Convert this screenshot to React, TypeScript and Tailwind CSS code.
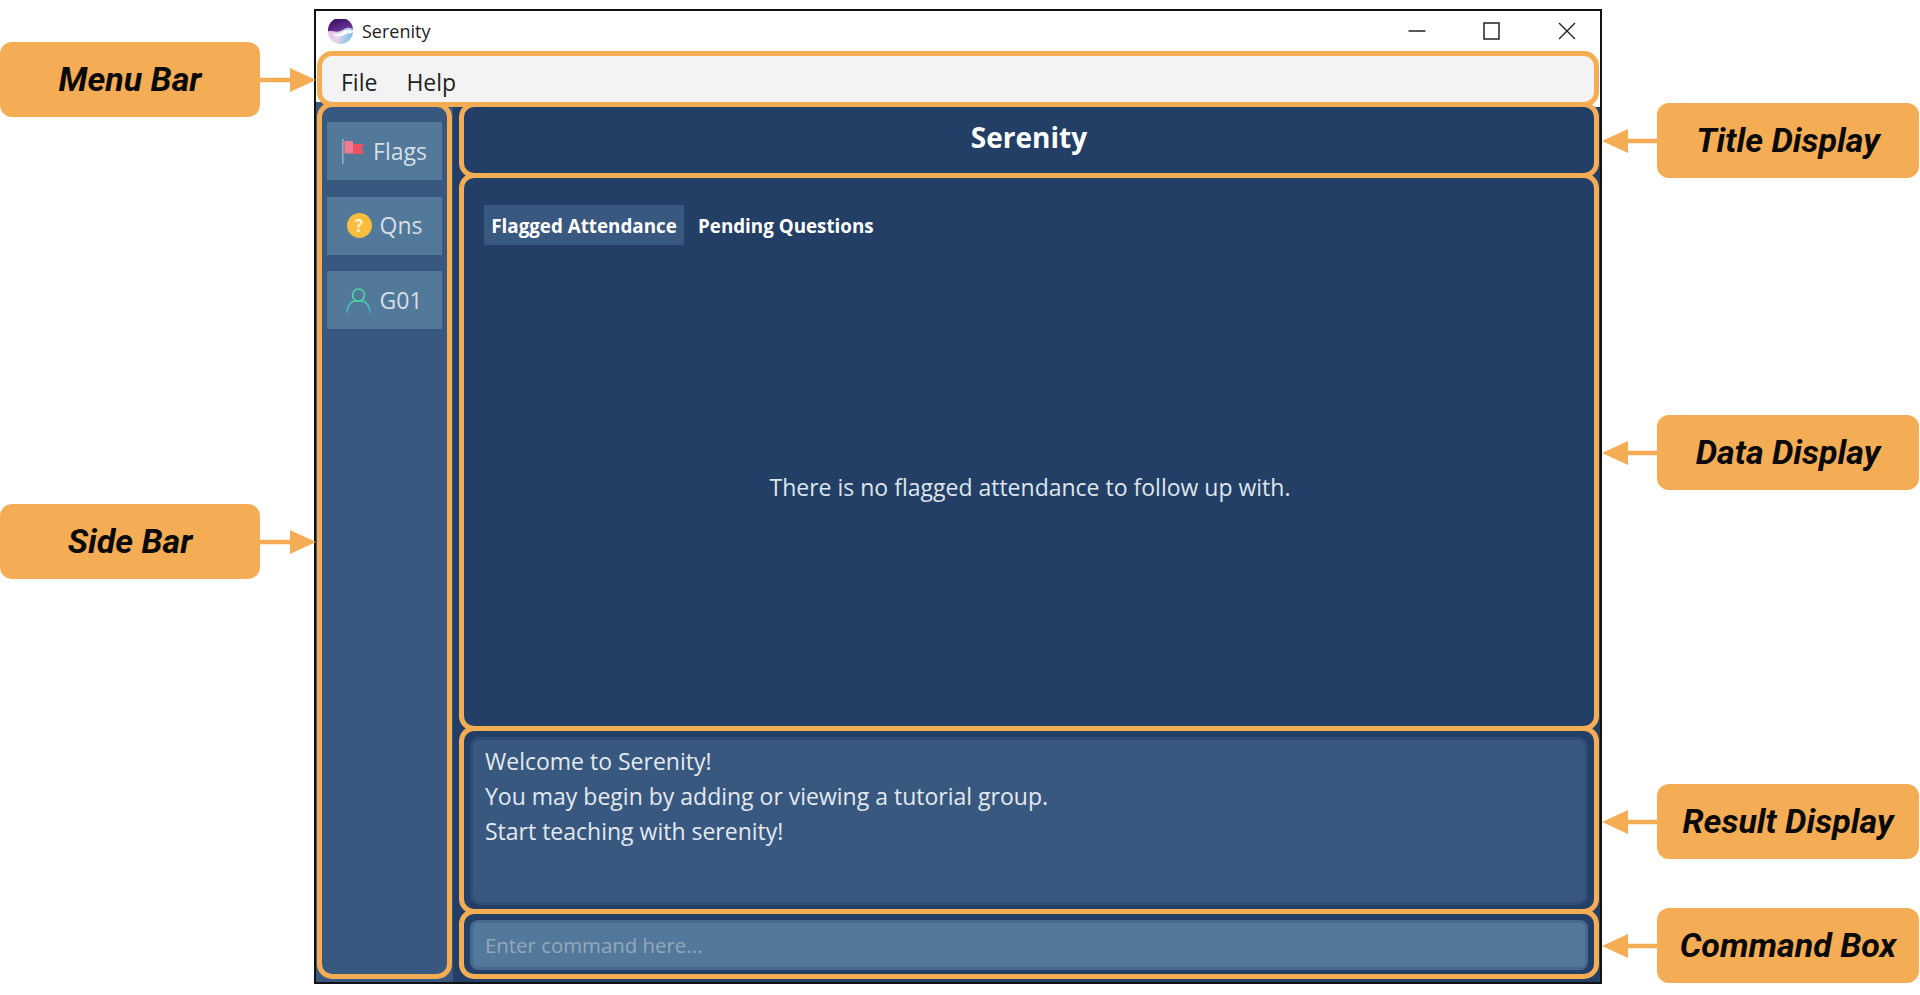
import { ReactNode } from "react";

const uiFont = "font-['Open_Sans','Noto_Sans',sans-serif]";

function Arrow({ dir }: { dir: "right" | "left" }) {
  return dir === "right" ? (
    <svg width="56" height="50" viewBox="0 0 56 50" className="relative z-20 shrink-0">
      <path d="M0 22.700H30V13L56 25L30 37V27.300H0Z" fill="#f5ad55" />
    </svg>
  ) : (
    <svg width="55" height="50" viewBox="0 0 55 50" className="shrink-0">
      <path d="M55 22.700H26V13L0 25L26 37V27.300H55Z" fill="#f5ad55" />
    </svg>
  );
}

function Callout({ label, dir, className }: { label: string; dir: "right" | "left"; className?: string }) {
  const box = (
    <div
      className={`flex h-[75px] shrink-0 items-center justify-center rounded-[12px] bg-[#f5ad55] font-['Roboto',sans-serif] text-[34px] font-bold italic text-[#0a0a0a] ${
        dir === "right" ? "w-[260px]" : "w-[262px]"
      }`}
    >
      {label}
    </div>
  );
  return (
    <div className={`flex items-center ${className ?? ""}`}>
      {dir === "right" ? (
        <>
          {box}
          <Arrow dir="right" />
        </>
      ) : (
        <>
          <Arrow dir="left" />
          {box}
        </>
      )}
    </div>
  );
}

function Outline({ className, children }: { className?: string; children?: ReactNode }) {
  return <div className={`rounded-[15px] border-[5px] border-[#f5ad55] ${className ?? ""}`}>{children}</div>;
}

function AppIcon() {
  return (
    <svg width="25" height="25" viewBox="0 0 25 25">
      <defs>
        <linearGradient id="top" x1="0.2" y1="0" x2="0.8" y2="1">
          <stop offset="0" stopColor="#2e0f5c" />
          <stop offset="1" stopColor="#7a3aa6" />
        </linearGradient>
        <linearGradient id="low" x1="0" y1="0" x2="1" y2="0.4">
          <stop offset="0" stopColor="#f0b4d6" />
          <stop offset="0.6" stopColor="#e6d6ee" />
          <stop offset="1" stopColor="#8cc4e6" />
        </linearGradient>
      </defs>
      <circle cx="12.500" cy="12.500" r="12.500" fill="url(#low)" />
      <path d="M0 12.500A12.500 12.500 0 0 1 25 10C20 7 16.500 10 12.500 12C8 14 4 11 0 12.500Z" fill="url(#top)" />
      <path d="M4 15C9 16.500 13 14 17 11.500C20 10 23 10.500 25 12.500C24 15 21 13.500 18 15C14 17.500 8 18.500 4 15Z" fill="#f6fbff" />
    </svg>
  );
}

function WindowControls() {
  return (
    <div className="flex items-center gap-[57px] pr-[23px]">
      <svg width="18" height="18" viewBox="0 0 18 18">
        <path d="M0.500 9H17.500" stroke="#222" strokeWidth="1.500" />
      </svg>
      <svg width="18" height="18" viewBox="0 0 18 18">
        <rect x="1" y="1" width="15" height="16" fill="none" stroke="#222" strokeWidth="1.500" />
      </svg>
      <svg width="18" height="18" viewBox="0 0 18 18">
        <path d="M1 1L17 17M17 1L1 17" stroke="#222" strokeWidth="1.400" />
      </svg>
    </div>
  );
}

function FlagIcon() {
  return (
    <svg width="22" height="25" viewBox="0 0 22 25">
      <path d="M0.800 0V25" stroke="#9fb2c4" strokeWidth="1.500" />
      <path d="M11 5H22L19.500 10L22 15H11Z" fill="#ec5266" />
      <path d="M2.500 2H11V14.500H2.500Z" fill="#f07a90" />
    </svg>
  );
}

function QuestionIcon() {
  return (
    <div className="flex h-[25px] w-[25px] items-center justify-center rounded-full bg-[#f9bd3e] text-[17px] font-bold leading-none text-[#fdf0d0]">
      ?
    </div>
  );
}

function PersonIcon() {
  return (
    <svg width="25" height="25" viewBox="0 0 25 25" fill="none" strokeWidth="1.600">
      <defs>
        <linearGradient id="person" x1="0" y1="0" x2="0" y2="1">
          <stop offset="0" stopColor="#4fd6a0" />
          <stop offset="1" stopColor="#3aa6e0" />
        </linearGradient>
      </defs>
      <circle cx="12.500" cy="7" r="6" stroke="#4fd6a0" />
      <path d="M1 25C1 18 5 13.500 8.500 13H16.500C20 13.500 24 18 24 25" stroke="url(#person)" />
    </svg>
  );
}

function SideButton({ icon, label, gap }: { icon: ReactNode; label: string; gap: string }) {
  return (
    <div className={`flex h-[58px] items-center justify-center ${gap} bg-[#52789a] text-[23px] text-[#d5dfe8]`}>
      {icon}
      <span>{label}</span>
    </div>
  );
}

export default function App() {
  return (
    <div className="flex h-[995px] w-[1920px] overflow-hidden bg-white">
      {/* left labels */}
      <div className="w-[314px] shrink-0 pt-[42px]">
        <Callout label="Menu Bar" dir="right" />
        <Callout label="Side Bar" dir="right" className="mt-[387px]" />
      </div>

      {/* app window */}
      <div className={`mt-[9px] flex h-[975px] w-[1288px] shrink-0 flex-col border-2 border-[#111] bg-[#243f65] ${uiFont}`}>
        <div className="shrink-0 bg-white px-[1px]">
          <div className="flex h-[40px] items-center justify-between pl-[11px]">
            <div className="flex items-center gap-[9px]">
              <AppIcon />
              <span className="text-[18px] text-[#222]">Serenity</span>
            </div>
            <WindowControls />
          </div>
          <div className="relative z-10 flex h-[56px] items-center gap-[29px] rounded-[15px] border-[5px] border-[#f5ad55] bg-[#f3f3f3] pl-[19px] pt-[6px] text-[23px] text-[#222]">
            <span>File</span>
            <span>Help</span>
          </div>
        </div>

        <div className="-mt-[5px] flex min-h-0 flex-1">
          {/* side bar */}
          <div className="w-[137px] shrink-0 bg-[#38587f] pb-[3px] pl-[1px]">
            <Outline className="flex h-full w-[135px] flex-col gap-[16.5px] px-[5px] pt-[15px]">
              <SideButton icon={<FlagIcon />} label="Flags" gap="gap-[9px]" />
              <SideButton icon={<QuestionIcon />} label="Qns" gap="gap-[8px]" />
              <SideButton icon={<PersonIcon />} label="G01" gap="gap-[8px]" />
            </Outline>
          </div>

          <div className="ml-[6px] mr-[1px] flex min-w-0 flex-1 flex-col">
            <Outline className="flex h-[76px] shrink-0 items-center justify-center pb-[6px] text-[28px] font-bold text-white">
              Serenity
            </Outline>

            <Outline className="-mt-[5px] flex h-[558px] shrink-0 flex-col px-[20px] pt-[27px]">
              <div className="flex h-[40px] items-center gap-[14px] text-[18.8px] font-bold text-white">
                <span className="flex h-[40px] w-[200px] items-center justify-center bg-[#38587f] pt-[2px]">Flagged Attendance</span>
                <span className="pt-[2px]">Pending Questions</span>
              </div>
              <div className="flex flex-1 items-center justify-center pl-[2px] pt-[3px] text-[23px] text-[#dde5ee]">
                There is no flagged attendance to follow up with.
              </div>
            </Outline>

            <Outline className="-mt-[5px] h-[188px] shrink-0 px-[6px] pb-[4px] pt-[6px]">
              <div className="h-full rounded-[10px] border-[3px] border-[#2f4d75] bg-[#38587f] pl-[12px] pt-[4px] text-[23px] leading-[35px] text-[#e3e9f0]">
                <p>Welcome to Serenity!</p>
                <p>You may begin by adding or viewing a tutorial group.</p>
                <p>Start teaching with serenity!</p>
              </div>
            </Outline>

            <Outline className="-mt-[5px] h-[70px] shrink-0 px-[6px] pb-[4px] pt-[6px]">
              <div className="flex h-full items-center rounded-[8px] border-[3px] border-[#48698e] bg-[#52789b] pl-[12px] text-[20.4px] text-[#94a8ba]">
                Enter command here...
              </div>
            </Outline>
          </div>
        </div>
      </div>

      {/* right labels */}
      <div className="w-[318px] shrink-0 pt-[103px]">
        <Callout label="Title Display" dir="left" />
        <Callout label="Data Display" dir="left" className="mt-[237px]" />
        <Callout label="Result Display" dir="left" className="mt-[294px]" />
        <Callout label="Command Box" dir="left" className="mt-[49px]" />
      </div>
    </div>
  );
}
